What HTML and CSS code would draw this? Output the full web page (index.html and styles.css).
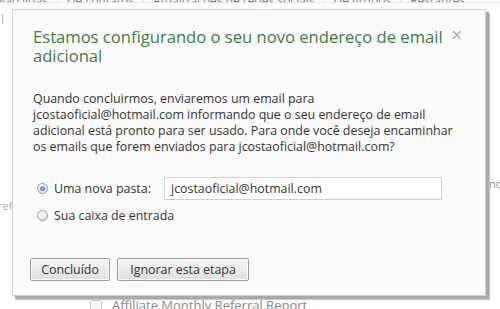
FILE: index.html
```html
<!DOCTYPE html>
<html lang="pt">
<head>
<meta charset="utf-8">
<title>Endereço de email adicional</title>
<link rel="stylesheet" href="styles.css">
</head>
<body>
<div class="page">
  <nav class="tabs">
    <span class="tab">Não lidas</span>
    <span class="tab">De contatos</span>
    <span class="tab">Atualizações de redes sociais</span>
    <span class="tab">De grupos</span>
    <span class="tab">Restantes <span class="caret">&#8963;</span></span>
  </nav>
  <div class="list">
    <div class="row row-a"><span class="frag frag-l">l</span></div>
    <div class="row row-b"><span class="frag frag-r">nd</span></div>
    <div class="row row-c"><span class="frag frag-ref">ref</span></div>
    <div class="row row-d">
      <span class="chk"></span>
      <span class="subject">Affiliate Monthly Referral Report</span>
    </div>
  </div>
</div>

<div class="dialog">
  <button class="close" aria-label="Fechar">&#215;</button>
  <h1 class="title">Estamos configurando o seu novo endereço de email adicional</h1>
  <p class="text">Quando concluirmos, enviaremos um email para<br>jcostaoficial@hotmail.com informando que o seu endereço de email<br>adicional está pronto para ser usado. Para onde você deseja encaminhar<br>os emails que forem enviados para jcostaoficial@hotmail.com?</p>
  <div class="options">
    <label class="option">
      <span class="radio checked"></span>
      <span class="opt-label">Uma nova pasta:</span>
      <span class="field">jcostaoficial@hotmail.com</span>
    </label>
    <label class="option">
      <span class="radio"></span>
      <span class="opt-label">Sua caixa de entrada</span>
    </label>
  </div>
  <div class="buttons">
    <button class="btn btn-done">Concluído</button>
    <button class="btn btn-skip">Ignorar esta etapa</button>
  </div>
</div>
</body>
</html>
```
FILE: styles.css
```css
html, body {
  margin: 0;
  padding: 0;
  background: #ffffff;
  font-family: "Open Sans", "Noto Sans", sans-serif;
  overflow: hidden;
}
.page {
  width: 500px;
  height: 309px;
  position: relative;
  overflow: hidden;
}
.tabs {
  display: flex;
  height: 8px;
  overflow: hidden;
  margin-top: -6px;
  font-size: 12px;
  line-height: 14px;
  color: #777;
  border-bottom: 1px solid #e6e6e6;
}
.tab {
  padding: 0 9px 0 9px;
  border-right: 1px solid #d8d8d8;
  white-space: nowrap;
}
.tab:first-child { padding-left: 0; margin-left: -4px; }
.tab:last-child { border-right: none; }
.caret { font-size: 10px; color: #999; }
.list {
  display: flex;
  flex-direction: column;
}
.row {
  position: relative;
  font-size: 11px;
  color: #999;
  white-space: nowrap;
  overflow: hidden;
}
.row-a { height: 20px; padding-top: 8px; }
.frag-l { display: block; margin-left: 1px; font-size: 12px; color: #aaa; }
.row-b { height: 40px; margin-top: 145px; }
.frag-r { display: block; margin-left: 489px; font-size: 11px; color: #888; }
.row-c { height: 20px; margin-top: -18px; }
.frag-ref { display: block; margin-left: -2px; color: #aaa; }
.row-d {
  display: flex;
  align-items: center;
  gap: 10px;
  margin-top: 78px;
  padding-left: 90px;
  font-size: 13px;
  color: #888;
}
.chk {
  width: 10px;
  height: 9px;
  border: 1px solid #c8c8c8;
  border-radius: 2px;
  background: #f4f4f4;
}

.dialog {
  position: absolute;
  left: 12px;
  top: 9px;
  width: 472px;
  height: 285px;
  background: #fafafa;
  border: 1px solid #cfcfcf;
  box-shadow: 3px 3px 0 #a9a9a9, 4px 4px 1px #c8c8c8;
  box-sizing: content-box;
  padding: 0;
}
.close {
  position: absolute;
  right: 22px;
  top: 17px;
  border: none;
  background: none;
  padding: 0;
  font-family: "DejaVu Sans", sans-serif;
  font-size: 15px;
  line-height: 16px;
  color: #aaa;
  cursor: pointer;
}
.title {
  margin: 17px 40px 0 20px;
  font-weight: normal;
  font-size: 16.6px;
  line-height: 19px;
  color: #3a7d40;
}
.text {
  margin: 26px 0 0 20px;
  font-size: 12.4px;
  line-height: 16px;
  color: #333;
  white-space: nowrap;
}
.options {
  display: flex;
  flex-direction: column;
  gap: 4px;
  margin: 22px 0 0 24px;
}
.option {
  display: flex;
  align-items: center;
  font-size: 12.4px;
  color: #333;
  height: 23px;
  white-space: nowrap;
}
.radio {
  flex-shrink: 0;
  width: 9px;
  height: 9px;
  border-radius: 50%;
  border: 1px solid #9a9a9a;
  background: radial-gradient(circle at 40% 35%, #ffffff, #d8d8d8);
  margin-right: 6px;
  position: relative;
}
.radio.checked::after {
  content: "";
  position: absolute;
  left: 2px;
  top: 2px;
  width: 5px;
  height: 5px;
  border-radius: 50%;
  background: radial-gradient(circle at 40% 35%, #8fc0ee, #2a63a8);
}
.opt-label { flex-shrink: 0; min-width: 110px; }
.field {
  flex-shrink: 0;
  width: 270px;
  height: 21px;
  border: 1px solid #cfcfcf;
  background: #fff;
  padding-left: 6px;
  line-height: 21px;
  font-size: 12.4px;
  color: #333;
}
.buttons {
  display: flex;
  gap: 7px;
  margin: 31px 0 0 17px;
}
.btn {
  height: 23px;
  padding: 0;
  font-family: "Open Sans", "Noto Sans", sans-serif;
  font-size: 12.4px;
  color: #333;
  border: 1px solid #9c9c9c;
  border-radius: 2px;
  background: linear-gradient(#f6f6f6, #dedede);
  box-shadow: inset 0 0 0 1px #fbfbfb;
  cursor: pointer;
}
.btn-done { width: 80px; }
.btn-skip { width: 132px; }
```
